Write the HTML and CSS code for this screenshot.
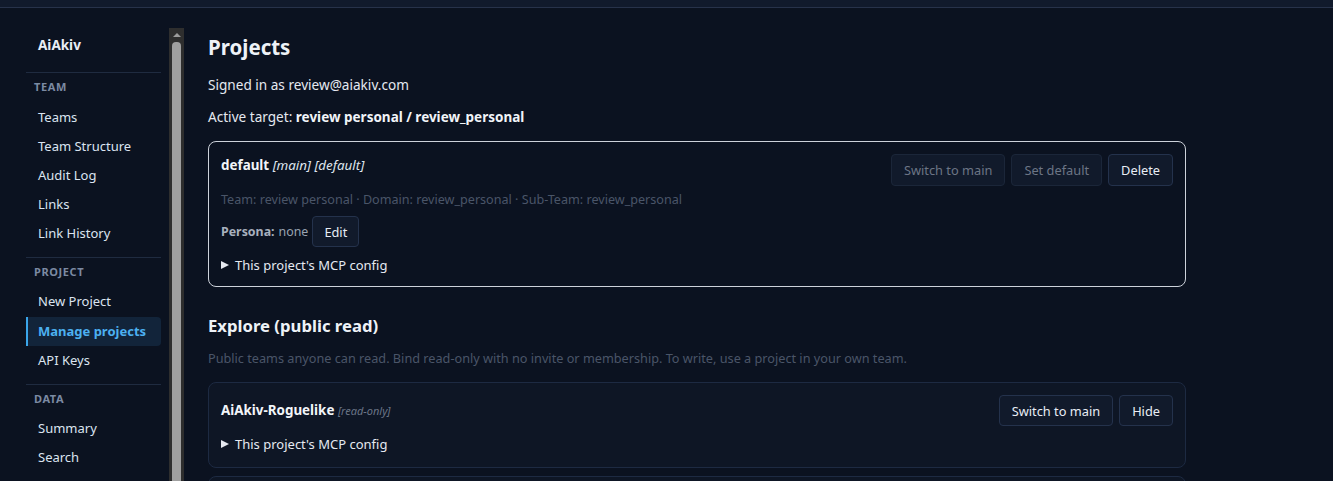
FILE: index.html
```html
<!DOCTYPE html>
<html lang="en">
<head>
<meta charset="utf-8">
<title>Projects</title>
<link rel="stylesheet" href="styles.css">
</head>
<body>
<div class="topbar"></div>
<div class="layout">
  <aside class="sidebar">
    <nav class="nav">
      <div class="brand">AiAkiv</div>
      <div class="section">
        <div class="label">TEAM</div>
        <a class="item">Teams</a>
        <a class="item">Team Structure</a>
        <a class="item">Audit Log</a>
        <a class="item">Links</a>
        <a class="item">Link History</a>
      </div>
      <div class="section">
        <div class="label">PROJECT</div>
        <a class="item">New Project</a>
        <a class="item active">Manage projects</a>
        <a class="item">API Keys</a>
      </div>
      <div class="section">
        <div class="label">DATA</div>
        <a class="item">Summary</a>
        <a class="item">Search</a>
      </div>
    </nav>
    <div class="scrollbar">
      <div class="sb-up"></div>
      <div class="sb-thumb"></div>
    </div>
  </aside>
  <main class="main">
    <h1 class="title">Projects</h1>
    <p class="line signed">Signed in as review@aiakiv.com</p>
    <p class="line target">Active target: <b>review personal / review_personal</b></p>

    <section class="card current">
      <div class="card-head top">
        <div class="card-title first"><b>default</b> <i class="tag">[main] [default]</i></div>
        <div class="actions">
          <button class="btn disabled">Switch to main</button>
          <button class="btn disabled">Set default</button>
          <button class="btn">Delete</button>
        </div>
      </div>
      <div class="meta">Team: review personal · Domain: review_personal · Sub-Team: review_personal</div>
      <div class="persona"><b>Persona:</b> none <button class="btn small">Edit</button></div>
      <div class="summary"><span class="tri"></span>This project's MCP config</div>
    </section>

    <h2 class="subhead">Explore (public read)</h2>
    <p class="desc">Public teams anyone can read. Bind read-only with no invite or membership. To write, use a project in your own team.</p>

    <section class="card public">
      <div class="card-head">
        <div class="card-title"><b>AiAkiv-Roguelike</b> <i class="ro">[read-only]</i></div>
        <div class="actions">
          <button class="btn">Switch to main</button>
          <button class="btn">Hide</button>
        </div>
      </div>
      <div class="summary"><span class="tri"></span>This project's MCP config</div>
    </section>
    <section class="card public next"></section>
  </main>
</div>
</body>
</html>
```

FILE: styles.css
```css
* { box-sizing: border-box; }
html, body { margin: 0; padding: 0; height: 100%; overflow: hidden; }
body {
  background: #0b1220;
  color: #e5e9f0;
  font-family: "Noto Sans", "Open Sans", sans-serif;
  font-size: 13.6px;
}
.topbar {
  height: 8px;
  background: #111a2c;
  border-bottom: 1px solid #27324a;
}
.layout {
  display: flex;
  align-items: flex-start;
  padding-top: 20px;
  height: calc(100% - 8px);
}
.sidebar {
  display: flex;
  height: 100%;
  margin-left: 26px;
  overflow: hidden;
}
.nav {
  width: 135px;
  display: flex;
  flex-direction: column;
}
.brand {
  font-weight: 700;
  font-size: 13.5px;
  line-height: 20px;
  padding: 7px 0 0 12px;
  margin-bottom: 17px;
  color: #e8edf5;
}
.section {
  border-top: 1px solid #1f2b40;
  padding-top: 7px;
  padding-bottom: 8.5px;
  display: flex;
  flex-direction: column;
}
.label {
  font-size: 11px;
  font-weight: 700;
  letter-spacing: 0.6px;
  line-height: 14px;
  color: #7b8aa3;
  padding-left: 8px;
  margin-bottom: 8.5px;
}
.item {
  display: block;
  height: 29.2px;
  line-height: 29px;
  padding-left: 12px;
  color: #dbe4f0;
  font-size: 13px;
  border-radius: 0 4px 4px 0;
}
.item.active {
  background: #12243a;
  color: #4cb0f0;
  font-weight: 700;
  border-left: 2px solid #3aa5ea;
  padding-left: 10px;
}
.scrollbar {
  width: 15px;
  margin-left: 8px;
  background: #2e2e2e;
  display: flex;
  flex-direction: column;
  align-items: center;
  height: 100%;
}
.sb-up {
  width: 0; height: 0;
  margin-top: 5px;
  border-left: 4px solid transparent;
  border-right: 4px solid transparent;
  border-bottom: 4px solid #9c9c9c;
}
.sb-thumb {
  margin-top: 5px;
  width: 9px;
  flex: 1;
  background: #9f9f9f;
  border-radius: 4px 4px 0 0;
}
.main {
  margin-left: 24px;
  width: 978px;
  margin-top: -20px;
  padding-top: 25px;
}
.title {
  margin: 0;
  font-size: 20.5px;
  line-height: 28px;
  font-weight: 700;
  color: #eef2f7;
}
.line {
  margin: 0;
  line-height: 20px;
  color: #e5e9f0;
}
.signed { margin-top: 14px; }
.target { margin-top: 12px; }
.target b { color: #f1f4f8; font-size: 13.5px; }
.card {
  border-radius: 8px;
  padding: 12px 12px 11px 12px;
}
.card.current {
  margin-top: 14px;
  border: 1px solid #cdd2da;
  background: #0b1220;
}
.card.public {
  border: 1px solid #1d2a42;
  background: #0e1625;
  padding-bottom: 13px;
}
.card.public + .card.public { margin-top: 8px; }
.card.next { height: 80px; }
.card-head {
  display: flex;
  justify-content: space-between;
  align-items: center;
}
.card-head.top { align-items: flex-start; }
.card-title { line-height: 20px; font-size: 13.4px; }
.card-title.first { margin-top: 1px; }
.card-title b { color: #f2f5f9; }
.tag { color: #dfe5ee; }
.ro { color: #6b7587; font-size: 11px; }
.actions { display: flex; gap: 6px; }
.btn {
  font-family: inherit;
  font-size: 12.8px;
  height: 32px;
  padding: 0 12px;
  background: #111a2b;
  color: #e8edf5;
  border: 1px solid #24324c;
  border-radius: 4px;
}
.card.public .btn { height: 31px; }
.btn.disabled { color: #6c7585; border-color: #1b2639; }
.btn.small { height: 31px; padding: 0 11px; margin-left: 0; }
.meta {
  margin-top: 5px;
  line-height: 18px;
  font-size: 12.6px;
  color: #4a5568;
}
.persona {
  margin-top: 7px;
  display: flex;
  align-items: center;
  gap: 4px;
  color: #9aa3b1;
  font-size: 12.4px;
}
.persona b { color: #a8b0bd; }
.summary {
  margin-top: 8px;
  line-height: 20px;
  font-size: 13px;
  color: #e5e9f0;
  display: flex;
  align-items: center;
}
.tri {
  width: 0; height: 0;
  border-top: 4.5px solid transparent;
  border-bottom: 4.5px solid transparent;
  border-left: 8px solid #e5e9f0;
  margin-right: 6px;
}
.subhead {
  margin: 27px 0 0 0;
  font-size: 16.7px;
  line-height: 24px;
  font-weight: 700;
  color: #eef2f7;
}
.desc {
  margin: 11px 0 15px 0;
  line-height: 18px;
  font-size: 12.7px;
  color: #4a5568;
}
```
